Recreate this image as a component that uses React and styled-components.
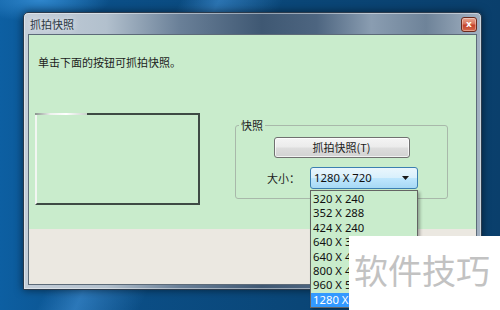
import React from "react";
import styled, { createGlobalStyle } from "styled-components";

const GlobalStyle = createGlobalStyle`
  html, body {
    margin: 0;
    padding: 0;
    background: #0b4a7e;
  }
  body {
    font-family: "Noto Sans CJK SC", "Noto Sans", sans-serif;
  }
`;

const sizes = [
  "320 X 240",
  "352 X 288",
  "424 X 240",
  "640 X 360",
  "640 X 480",
  "800 X 448",
  "960 X 544",
  "1280 X 720",
];

export default function App() {
  return (
    <>
      <GlobalStyle />
      <Desktop>
        <Window>
          <TitleBar>
            <Title>抓拍快照</Title>
            <CloseButton>x</CloseButton>
          </TitleBar>
          <Client>
            <Body>
              <Intro>单击下面的按钮可抓拍快照。</Intro>
              <ContentRow>
                <Preview />
                <Group>
                  <GroupLabel>快照</GroupLabel>
                  <SnapButton>抓拍快照(T)</SnapButton>
                  <SizeRow>
                    <SizeLabel>大小：</SizeLabel>
                    <Combo>
                      <ComboValue>1280 X 720</ComboValue>
                      <Arrow viewBox="0 0 7 4" width="7" height="4">
                        <path d="M0 0h7L3.5 4z" fill="#1a1a1a" />
                      </Arrow>
                      <DropList>
                        {sizes.map((s, i) => (
                          <DropItem key={s} $active={i === sizes.length - 1}>
                            {s}
                          </DropItem>
                        ))}
                      </DropList>
                    </Combo>
                  </SizeRow>
                </Group>
              </ContentRow>
            </Body>
            <Footer />
          </Client>
        </Window>
        <Watermark>软件技巧</Watermark>
      </Desktop>
    </>
  );
}

const Desktop = styled.div`
  position: relative;
  width: 500px;
  height: 310px;
  overflow: hidden;
  box-sizing: border-box;
  padding: 12px 0 0 23px;
  background:
    radial-gradient(ellipse 70px 22px at 40px 0px, #2f86cc 0%, rgba(47, 134, 204, 0) 100%),
    linear-gradient(115deg, rgba(0, 0, 0, 0) 0%, rgba(0, 0, 0, 0) 28%, rgba(70, 150, 220, 0.55) 34%, rgba(0, 0, 0, 0) 44%),
    linear-gradient(90deg, #0d5fa2 0%, #0b4f88 20%, #0a4677 60%, #0a3f6c 100%);
`;

const Window = styled.div`
  width: 459px;
  height: 278px;
  box-sizing: border-box;
  display: flex;
  flex-direction: column;
  border: 1px solid #2a3a4c;
  border-radius: 5px 5px 0 0;
  padding: 0 4px 4px 4px;
  background: linear-gradient(
    90deg,
    #c4ced9 0%,
    #b2c0cd 18%,
    #6a8098 34%,
    #3f5873 52%,
    #4d6580 64%,
    #8a9db1 76%,
    #6e8399 88%,
    #a3b2c2 100%
  );
  box-shadow: 0 0 8px rgba(0, 0, 0, 0.55), inset 0 0 0 1px rgba(255, 255, 255, 0.45);
`;

const TitleBar = styled.div`
  height: 21px;
  display: flex;
  align-items: flex-start;
  justify-content: space-between;
  padding-left: 2px;
`;

const Title = styled.span`
  margin-top: 4px;
  font-size: 11px;
  line-height: 14px;
  color: #2c3844;
  text-shadow: 0 0 6px rgba(255, 255, 255, 0.9);
`;

const CloseButton = styled.div`
  margin-top: 4px;
  width: 16px;
  height: 15px;
  box-sizing: border-box;
  border: 1px solid #6b2a1c;
  border-radius: 3px;
  background: linear-gradient(180deg, #e9a690 0%, #d8735a 45%, #c4422a 55%, #d66a4c 100%);
  color: #fff;
  font-family: "DejaVu Sans", sans-serif;
  font-weight: bold;
  font-size: 9px;
  line-height: 12px;
  text-align: center;
  box-shadow: inset 0 0 0 1px rgba(255, 255, 255, 0.35);
`;

const Client = styled.div`
  flex: 1;
  display: flex;
  flex-direction: column;
  border: 1px solid #5c6a78;
  background: #ebe8e1;
`;

const Body = styled.div`
  flex: 0 0 194px;
  box-sizing: border-box;
  background: #c9eccc;
  padding-top: 20px;
`;

const Intro = styled.div`
  padding-left: 9px;
  font-size: 11px;
  line-height: 14px;
  color: #1c1c1c;
`;

const ContentRow = styled.div`
  margin-top: 44px;
  display: flex;
  align-items: flex-start;
  padding-left: 6px;
`;

const Preview = styled.div`
  position: relative;
  width: 165px;
  height: 92px;
  box-sizing: border-box;
  border: 2px solid #3e4a44;
  border-left-color: #f2f6f2;

  &::before {
    content: "";
    position: absolute;
    top: -2px;
    left: -2px;
    width: 52px;
    height: 2px;
    background: linear-gradient(90deg, #8a948e 0%, #eef2ee 30%, #ffffff 60%, #c9d2cb 100%);
  }
`;

const Group = styled.div`
  position: relative;
  margin-left: 35px;
  margin-top: 12px;
  width: 213px;
  height: 74px;
  box-sizing: border-box;
  border: 1px solid #a8b8aa;
  border-radius: 3px;
  padding-top: 11px;
  display: flex;
  flex-direction: column;
  align-items: center;
`;

const GroupLabel = styled.span`
  position: absolute;
  top: -7px;
  left: 3px;
  padding: 0 2px;
  background: #c9eccc;
  font-size: 11px;
  line-height: 13px;
  color: #1c1c1c;
`;

const SnapButton = styled.div`
  width: 136px;
  height: 21px;
  box-sizing: border-box;
  border: 1px solid #707070;
  border-radius: 3px;
  background: linear-gradient(180deg, #f4f4f4 0%, #ebebeb 48%, #dddddd 52%, #d2d2d2 100%);
  box-shadow: inset 0 0 0 1px rgba(255, 255, 255, 0.7);
  font-size: 11px;
  line-height: 19px;
  text-align: center;
  color: #1c1c1c;
`;

const SizeRow = styled.div`
  align-self: stretch;
  margin-top: 9px;
  padding-left: 31px;
  display: flex;
  align-items: center;
`;

const SizeLabel = styled.span`
  width: 43px;
  font-size: 11px;
  line-height: 14px;
  color: #1c1c1c;
`;

const Combo = styled.div`
  position: relative;
  width: 108px;
  height: 22px;
  box-sizing: border-box;
  border: 1px solid #3c7fb1;
  border-radius: 3px;
  background: linear-gradient(180deg, #eaf6fd 0%, #d9f0fc 48%, #bee6fd 52%, #a7d9f5 100%);
  display: flex;
  align-items: center;
  justify-content: space-between;
  padding: 0 8px 0 3px;
`;

const ComboValue = styled.span`
  font-family: "Noto Sans", "Noto Sans CJK SC", sans-serif;
  font-size: 11.3px;
  line-height: 14px;
  color: #101010;
`;

const Arrow = styled.svg`
  display: block;
`;

const DropList = styled.div`
  position: absolute;
  top: 22px;
  left: -1px;
  width: 108px;
  box-sizing: border-box;
  border: 1px solid #646464;
  background: #c9eccc;
  padding-top: 1px;
  box-shadow: 2px 2px 3px rgba(0, 0, 0, 0.3);
  z-index: 2;
`;

const DropItem = styled.div`
  height: 14.4px;
  padding-left: 2px;
  font-family: "Noto Sans", "Noto Sans CJK SC", sans-serif;
  font-size: 11.3px;
  line-height: 14.4px;
  color: ${(p) => (p.$active ? "#ffffff" : "#101010")};
  background: ${(p) => (p.$active ? "#3399ff" : "transparent")};
`;

const Footer = styled.div`
  flex: 1;
  background: #ebe8e1;
`;

const Watermark = styled.div`
  position: absolute;
  left: 349px;
  top: 236px;
  right: 0;
  bottom: 0;
  background: #ffffff;
  box-sizing: border-box;
  padding: 14px 0 0 5px;
  font-size: 34px;
  line-height: 40px;
  letter-spacing: 0px;
  color: #c2c2c2;
  z-index: 3;
`;
